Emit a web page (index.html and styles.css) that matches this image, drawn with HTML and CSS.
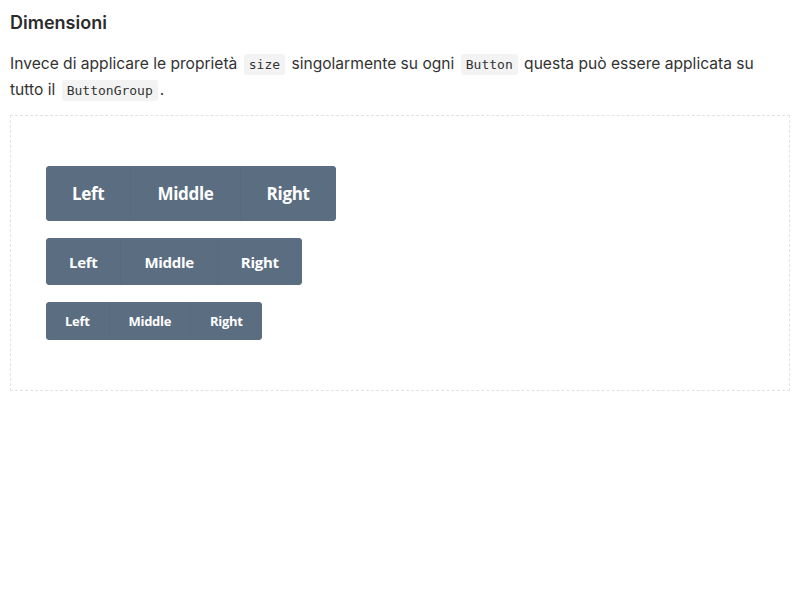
FILE: index.html
```html
<!DOCTYPE html>
<html lang="it">
<head>
<meta charset="utf-8">
<link rel="stylesheet" href="styles.css">
</head>
<body>
<h3 class="title">Dimensioni</h3>
<p class="desc">Invece di applicare le proprietà <code>size</code> singolarmente su ogni <code>Button</code> questa può essere applicata su tutto il <code>ButtonGroup</code>.</p>
<div class="demo">
  <div class="group lg"><button>Left</button><button>Middle</button><button>Right</button></div>
  <div class="group md"><button>Left</button><button>Middle</button><button>Right</button></div>
  <div class="group sm"><button>Left</button><button>Middle</button><button>Right</button></div>
</div>
</body>
</html>
```
FILE: styles.css
```css
body {
  margin: 0;
  padding: 0 10px;
  font-family: Inter, "Noto Sans", sans-serif;
  color: #333;
  background: #fff;
}
.title {
  margin: 12px 0 0;
  font-size: 18px;
  font-weight: 600;
  line-height: 22px;
  color: #2c2c2c;
}
.desc {
  margin: 17px 0 0;
  font-size: 15.6px;
  line-height: 25px;
  color: #333;
}
code {
  font-family: "DejaVu Sans Mono", monospace;
  font-size: 13px;
  background: #f3f3f3;
  border-radius: 3px;
  padding: 3px 5px;
  margin: 0 2px;
  color: #333;
}
.demo {
  margin-top: 12px;
  border: 1px dashed #e2e2e2;
  padding: 50px 35px 50px;
  display: flex;
  flex-direction: column;
  align-items: flex-start;
  gap: 17px;
}
.group {
  display: flex;
  border-radius: 4px;
  overflow: hidden;
  background: #5b6d81;
}
.group button {
  border: 0;
  background: #5b6d81;
  color: #fff;
  font-family: "Open Sans", sans-serif;
  font-weight: 700;
  margin: 0;
  letter-spacing: -0.3px;
}
.group button + button {
  border-left: 1px solid #586a7e;
}
.lg button { height: 55px; font-size: 17px; padding: 0 26px; }
.md button { height: 47px; font-size: 15px; padding: 0 23px; }
.sm button { height: 38px; font-size: 13px; padding: 0 19px; }
```
